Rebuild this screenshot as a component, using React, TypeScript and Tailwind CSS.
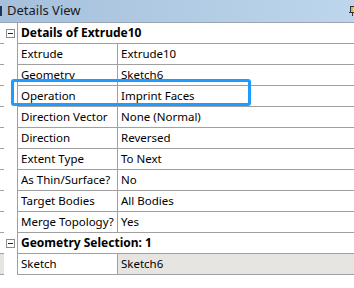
const font = { fontFamily: '"Noto Sans", "Open Sans", sans-serif' };

type Row = { label: string; value: string; shaded?: boolean };

const extrudeRows: Row[] = [
  { label: "Extrude", value: "Extrude10" },
  { label: "Geometry", value: "Sketch6" },
  { label: "Operation", value: "Imprint Faces" },
  { label: "Direction Vector", value: "None (Normal)" },
  { label: "Direction", value: "Reversed" },
  { label: "Extent Type", value: "To Next" },
  { label: "As Thin/Surface?", value: "No" },
  { label: "Target Bodies", value: "All Bodies" },
  { label: "Merge Topology?", value: "Yes" },
];

const selectionRows: Row[] = [{ label: "Sketch", value: "Sketch6", shaded: true }];

function MinusBox() {
  return (
    <div className="ml-[2px] flex h-[9px] w-[9px] items-center justify-center border border-[#8c8c8c] bg-white">
      <div className="h-px w-[5px] bg-[#222]" />
    </div>
  );
}

function GroupRow({ title }: { title: string }) {
  return (
    <div className="flex h-[21px]">
      <div className="w-[4px] border-b border-[#a0a0a0]" />
      <div className="flex w-[13px] items-center">
        <MinusBox />
      </div>
      <div className="flex flex-1 items-center border-b border-l border-[#a0a0a0] pl-[3px] text-[12px] font-bold text-black">
        {title}
      </div>
    </div>
  );
}

function PropRow({ row }: { row: Row }) {
  return (
    <div className="flex h-[21px]">
      <div className={`w-[4px] border-b border-[#a0a0a0] ${row.shaded ? "bg-[#e6e5e1]" : ""}`} />
      <div className="w-[13px]" />
      <div className="flex flex-1 border-b border-l border-[#a0a0a0] text-[11.5px] text-black">
        <div className="flex w-[100px] items-center overflow-hidden border-r border-[#a0a0a0] pl-[3px] whitespace-nowrap">
          {row.label}
        </div>
        <div className={`flex flex-1 items-center pl-[3px] whitespace-nowrap ${row.shaded ? "bg-[#e6e5e1]" : ""}`}>
          {row.value}
        </div>
      </div>
    </div>
  );
}

export default function App() {
  return (
    <div className="relative h-[288px] w-[354px] overflow-hidden bg-white" style={font}>
      <div className="flex h-[23px] items-center border-b border-[#9ba5b0] bg-gradient-to-r from-[#a6c0dc] to-[#bdd6ec]">
        <div className="flex h-full w-[4px] items-center">
          <div className="h-[10px] w-[2px] bg-[#1d3557]" />
        </div>
        <span className="pl-[3px] text-[13px] text-[#1b1b1b]">Details View</span>
        <svg className="ml-auto mr-[-3px]" width="8" height="10" viewBox="0 0 8 10">
          <rect x="1" y="0" width="1" height="6" fill="#333" />
          <rect x="1" y="0" width="5" height="1" fill="#333" />
          <rect x="2" y="1" width="2" height="5" fill="#d9b54a" />
          <rect x="0" y="6" width="7" height="1" fill="#333" />
          <rect x="3" y="7" width="1" height="3" fill="#333" />
        </svg>
      </div>

      <GroupRow title="Details of Extrude10" />
      {extrudeRows.map((r) => (
        <PropRow key={r.label} row={r} />
      ))}
      <GroupRow title="Geometry Selection: 1" />
      {selectionRows.map((r) => (
        <PropRow key={r.label} row={r} />
      ))}

      <div className="absolute left-[11px] top-[79px] h-[27px] w-[240px] rounded-[3px] border-[3px] border-[#1e9bff]" />
    </div>
  );
}
